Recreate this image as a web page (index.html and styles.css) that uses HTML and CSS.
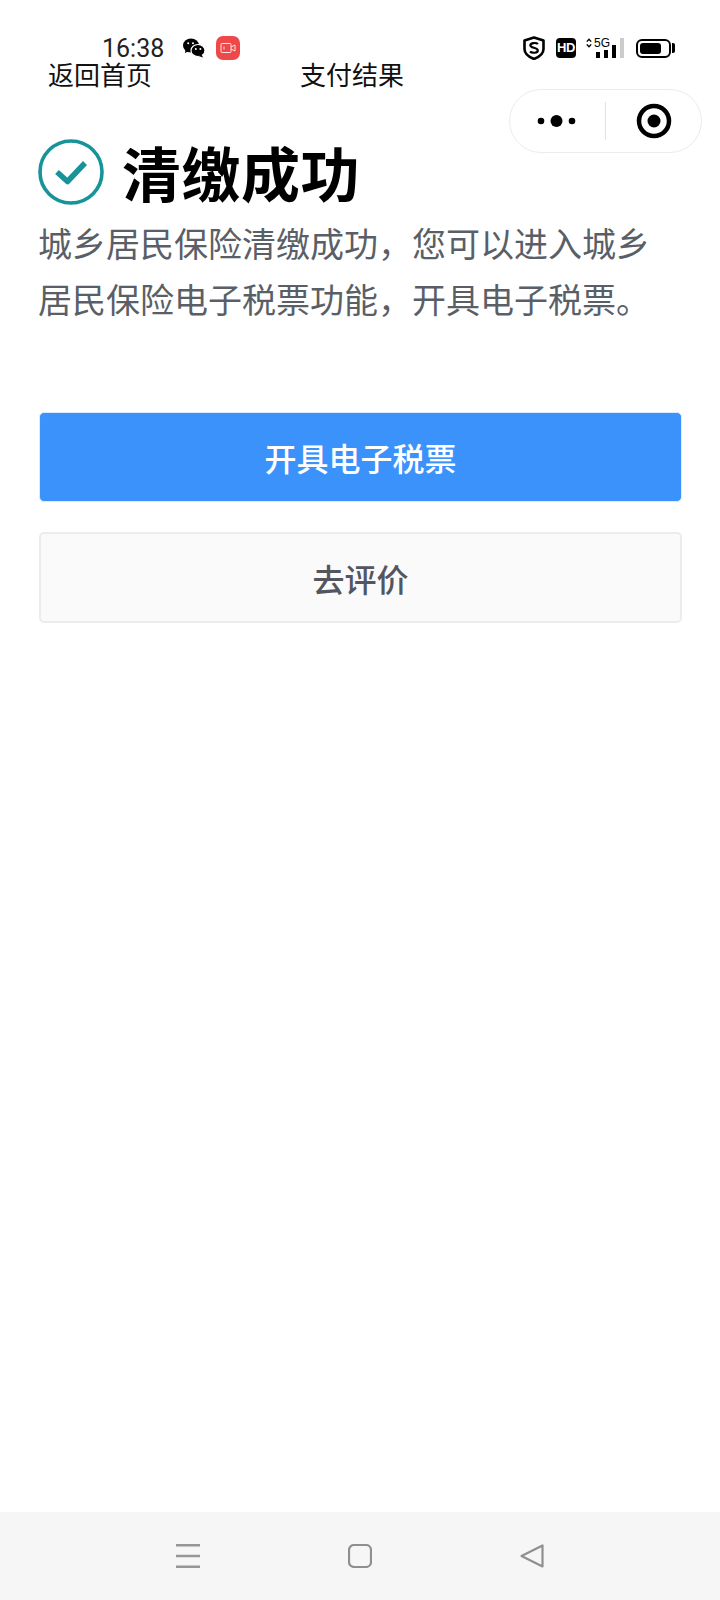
FILE: index.html
```html
<!DOCTYPE html>
<html lang="zh-CN">
<head>
<meta charset="UTF-8">
<meta name="viewport" content="width=device-width, initial-scale=1.0">
<title>支付结果</title>
<link rel="stylesheet" href="styles.css">
</head>
<body>
<div class="page">
    <div class="status-bar">
        <span class="time">16:38</span>
        <svg class="icon-wechat" width="22" height="20" viewBox="0 0 22 20">
            <ellipse cx="8" cy="7.5" rx="8" ry="7"/>
            <path d="M2.5 11.5 L2 15 L6 13z"/>
            <ellipse cx="15" cy="12.5" rx="7" ry="6" stroke="#fff" stroke-width="1.2"/>
            <path d="M18.5 16.5 L20 19.5 L15.5 18z"/>
            <circle cx="5.2" cy="5.2" r="1" fill="#fff"/>
            <circle cx="10" cy="5.2" r="1" fill="#fff"/>
            <circle cx="12.8" cy="11" r="1" fill="#fff"/>
            <circle cx="17.4" cy="11" r="1" fill="#fff"/>
        </svg>
        <span class="icon-record">
            <svg width="16" height="12" viewBox="0 0 16 12" fill="none" stroke="#fff" stroke-width="1" opacity="0.85">
                <rect x="1" y="1.5" width="10" height="9" rx="1"/>
                <path d="M11 5 L15 3 V9 L11 7"/>
                <path d="M4 4.5 V7.5"/>
            </svg>
        </span>
        <div class="status-right">
            <svg width="22" height="24" viewBox="0 0 22 24">
                <path d="M11 1.5 L20.5 4.5 V13 C20.5 18 16 21 11 23 C6 21 1.5 18 1.5 13 V4.5z" fill="none" stroke="#000" stroke-width="2.6" stroke-linejoin="round"/>
                <path d="M15 8 C13.5 6.6 7.5 6.4 7.3 9.3 C7.2 12.4 14.8 11 14.8 14.4 C14.8 17.4 8.5 17.2 7 15.6" fill="none" stroke="#000" stroke-width="2.2"/>
            </svg>
            <span class="icon-hd">HD</span>
            <div class="signal">
                <div class="signal-label">
                    <svg width="6" height="10" viewBox="0 0 6 10" fill="none" stroke="#000" stroke-width="1.4"><path d="M0.8 3.6 L3 1.2 L5.2 3.6 M0.8 6.4 L3 8.8 L5.2 6.4"/></svg>
                    <span>5G</span>
                </div>
                <div class="signal-bars">
                    <i class="bar bar-1"></i><i class="bar bar-2"></i><i class="bar bar-3"></i><i class="bar bar-4"></i>
                </div>
            </div>
            <div class="battery"><div class="battery-level"></div></div>
        </div>
    </div>

    <div class="nav-bar">
        <a class="nav-back">返回首页</a>
        <span class="nav-title">支付结果</span>
    </div>

    <div class="capsule">
        <svg width="40" height="14" viewBox="0 0 40 14">
            <circle cx="4" cy="7" r="3.3"/>
            <circle cx="19.5" cy="7" r="6"/>
            <circle cx="35" cy="7" r="3.3"/>
        </svg>
        <span class="capsule-line"></span>
        <svg width="36" height="36" viewBox="0 0 36 36">
            <circle cx="18" cy="18" r="15" fill="none" stroke="#000" stroke-width="4.5"/>
            <circle cx="18" cy="18" r="6.5"/>
        </svg>
    </div>

    <div class="content">
        <div class="result-head">
            <svg width="66" height="66" viewBox="0 0 66 66">
                <circle cx="33" cy="33" r="31" fill="none" stroke="#17939a" stroke-width="3.6"/>
                <path d="M19 33 L29.5 42.5 L47 24" fill="none" stroke="#17939a" stroke-width="5.5" stroke-linejoin="round"/>
            </svg>
            <h1>清缴成功</h1>
        </div>
        <p class="result-text">城乡居民保险清缴成功，您可以进入城乡居民保险电子税票功能，开具电子税票。</p>
        <button class="btn btn-primary" type="button">开具电子税票</button>
        <button class="btn btn-default" type="button">去评价</button>
    </div>

    <div class="home-bar">
        <svg width="24" height="24" viewBox="0 0 24 24" fill="none" stroke="#969696" stroke-width="2.4">
            <path d="M0 1.2 H24 M0 12 H24 M0 22.8 H24"/>
        </svg>
        <svg width="24" height="24" viewBox="0 0 24 24" fill="none" stroke="#8f8f8f" stroke-width="2.2">
            <rect x="1" y="1" width="22" height="22" rx="5"/>
        </svg>
        <svg width="24" height="24" viewBox="0 0 24 24" fill="none" stroke="#8f8f8f" stroke-width="2.2" stroke-linejoin="round">
            <path d="M22.5 1.5 V22.5 L1.5 12z"/>
        </svg>
    </div>
</div>
</body>
</html>
```

FILE: styles.css
```css
* {
    box-sizing: border-box;
}

body {
    margin: 0;
    background-color: #fff;
    font-family: "Noto Sans CJK SC", "Noto Sans", sans-serif;
}

.page {
    position: relative;
    display: flex;
    flex-direction: column;
    width: 720px;
    height: 1600px;
    overflow: hidden;
}

.status-bar {
    display: flex;
    align-items: center;
    height: 28px;
    margin-top: 34px;
    padding-left: 102px;
    padding-right: 49px;
}

.time {
    width: 81px;
    margin-top: 2px;
    font-family: Roboto, sans-serif;
    font-size: 25px;
    font-weight: 400;
    line-height: 28px;
    color: #222;
}

.icon-wechat {
    margin-right: 11px;
}

.icon-record {
    display: flex;
    align-items: center;
    justify-content: center;
    width: 24px;
    height: 24px;
    border-radius: 7px;
    background-color: #ee4848;
}

.status-right {
    display: flex;
    align-items: center;
    margin-left: auto;
}

.icon-hd {
    width: 20px;
    height: 20px;
    margin-left: 11px;
    border-radius: 4px;
    background-color: #000;
    color: #fff;
    font-family: "Liberation Sans", sans-serif;
    font-size: 13px;
    font-weight: 700;
    line-height: 20px;
    text-align: center;
    letter-spacing: -0.5px;
}

.signal {
    position: relative;
    width: 38px;
    height: 20px;
    margin-left: 10px;
}

.signal-label {
    display: flex;
    align-items: center;
    gap: 2px;
    height: 10px;
    font-family: "Liberation Sans", sans-serif;
    font-size: 12px;
    font-weight: 400;
    line-height: 10px;
}

.signal-bars {
    position: absolute;
    right: 0;
    bottom: 0;
    display: flex;
    align-items: flex-end;
    gap: 4px;
}

.bar {
    display: block;
    width: 4px;
    background-color: #000;
}

.bar-1 {
    height: 6px;
}

.bar-2 {
    height: 8px;
}

.bar-3 {
    height: 13px;
}

.bar-4 {
    height: 20px;
    background-color: #ccc;
}

.battery {
    position: relative;
    width: 35px;
    height: 19px;
    margin-left: 12px;
    padding: 2px;
    border: 2px solid #000;
    border-radius: 6px;
}

.battery::after {
    content: "";
    position: absolute;
    right: -6px;
    top: 2.5px;
    width: 3px;
    height: 10px;
    border-radius: 0 2px 2px 0;
    background-color: #000;
}

.battery-level {
    width: 21px;
    height: 11px;
    border-radius: 3px;
    background-color: #000;
}

.nav-bar {
    display: flex;
    align-items: center;
    height: 26px;
    margin-top: -1px;
    padding-left: 48px;
    font-size: 26px;
    line-height: 26px;
    color: #111;
}

.nav-back {
    width: 252px;
}

.capsule {
    position: absolute;
    top: 89px;
    left: 509px;
    display: flex;
    align-items: center;
    width: 193px;
    height: 64px;
    padding-left: 27px;
    border: 1px solid #ececec;
    border-radius: 32px;
    background-color: #fff;
}

.capsule-line {
    width: 1px;
    height: 38px;
    margin-left: 28px;
    margin-right: 30px;
    background-color: #e2e2e2;
}

.content {
    flex: 1;
    padding: 52px 38px 0 39px;
}

.result-head {
    display: flex;
    align-items: center;
    gap: 18px;
    height: 66px;
    margin-left: -1px;
}

.result-head h1 {
    margin: 0;
    font-size: 59px;
    font-weight: 700;
    line-height: 66px;
    letter-spacing: 0.5px;
    color: #000;
}

.result-text {
    width: 620px;
    margin: 10px 0 0 -1px;
    font-size: 34px;
    line-height: 56px;
    color: #5a5f67;
}

.btn {
    display: block;
    width: 643px;
    font-family: inherit;
    font-size: 32px;
    font-weight: 500;
    text-align: center;
    border-radius: 5px;
}

.btn-primary {
    height: 90px;
    margin-top: 85px;
    border: 1px solid #d9ecff;
    background-color: #3c92fb;
    color: #fff;
}

.btn-default {
    height: 91px;
    margin-top: 30px;
    border: 2px solid #ececec;
    background-color: #fafafa;
    color: #53565f;
}

.home-bar {
    display: flex;
    align-items: center;
    justify-content: space-between;
    height: 88px;
    padding: 0 176px 0 176px;
    background-color: #f6f6f6;
}
```
